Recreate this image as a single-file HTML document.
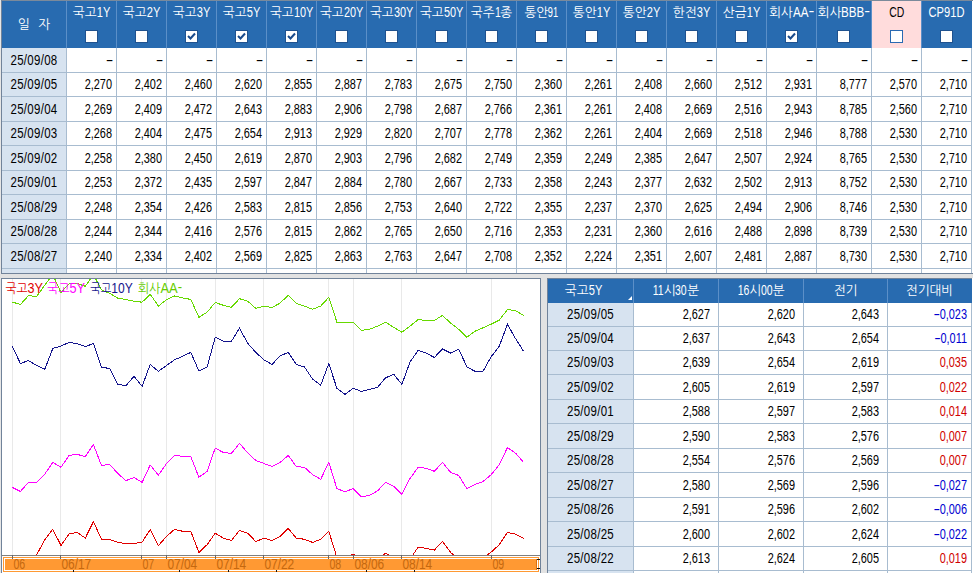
<!DOCTYPE html>
<html lang="ko"><head><meta charset="utf-8"><title>채권 금리</title>
<style>
html,body{margin:0;padding:0;}
body{width:973px;height:573px;overflow:hidden;background:#e2e2e2;position:relative;font-family:"Liberation Sans","NanumGothic","Noto Sans CJK KR",sans-serif;font-size:12px;line-height:14px;color:#000;}
div{position:absolute;box-sizing:border-box;white-space:nowrap;}
.h{background:#286bb0;color:#fff;text-align:center;}
.ht{left:-10px;right:-10px;text-align:center;font-size:13px;transform:scaleX(0.97);}
.L{display:inline-block;font-size:14px;transform-origin:left center;}
.d{background:#d7e3f0;text-align:center;}
.n{background:#fff;text-align:right;}
.cb{width:13px;height:13px;background:#fff;border:1px solid #1f528f;}
.cb svg{position:absolute;left:0;top:0;}
.vl{width:1px;background:#a8bcd0;}
.hl{height:1px;background:#a8bcd0;}
.t{left:0;right:0;font-size:14px;transform:scaleX(0.78);}
.n .t{transform-origin:right center;left:-10px;}
.d .t{letter-spacing:0.35px;left:-10px;right:-10px;transform:scaleX(0.82);}
.hy{display:inline-block;transform:scaleX(1.45) translateY(-1px);transform-origin:left center;}
.m{display:inline-block;transform:scaleX(2.1);transform-origin:right center;margin-right:-1.5px;}
.m2{display:inline-block;transform:scaleX(1.8);transform-origin:center center;margin:0 1.5px 0 2px;}

</style></head><body>
<div id="top" style="left:0;top:0;width:973px;height:274px;background:#fff;">
<div style="left:0;top:0;width:973px;height:1px;background:#7b8a9b;"></div>
<div style="left:0;top:0;width:1px;height:274px;background:#e6e6e6;"></div>
<div style="left:1px;top:0;width:1px;height:274px;background:#71839a;"></div>
<div style="left:1px;top:273px;width:972px;height:1px;background:#71839a;"></div>
<div class="h" style="left:2px;top:1px;width:970px;height:47px;"></div>
<div class="h" style="left:2px;top:1px;width:64px;height:47px;"><div class="ht" style="top:17px;word-spacing:0.8px;">일&nbsp; 자</div></div>
<div class="h" style="left:67px;top:1px;width:49px;height:47px;">
<div class="ht" style="top:4px;">국고<span class="L" style="transform:scaleX(0.818);margin-right:-3.12px;">1Y</span></div>
<div class="cb" style="left:18px;top:29px;"></div>
</div>
<div class="h" style="left:117px;top:1px;width:49px;height:47px;">
<div class="ht" style="top:4px;">국고<span class="L" style="transform:scaleX(0.818);margin-right:-3.12px;">2Y</span></div>
<div class="cb" style="left:18px;top:29px;"></div>
</div>
<div class="h" style="left:167px;top:1px;width:49px;height:47px;">
<div class="ht" style="top:4px;">국고<span class="L" style="transform:scaleX(0.818);margin-right:-3.12px;">3Y</span></div>
<div class="cb" style="left:18px;top:29px;"><svg width="11" height="11" viewBox="0 0 11 11"><path d="M2 5 L4.5 7.5 L9 2.5" fill="none" stroke="#1a4b8c" stroke-width="2"/></svg></div>
</div>
<div class="h" style="left:217px;top:1px;width:49px;height:47px;">
<div class="ht" style="top:4px;">국고<span class="L" style="transform:scaleX(0.818);margin-right:-3.12px;">5Y</span></div>
<div class="cb" style="left:18px;top:29px;"><svg width="11" height="11" viewBox="0 0 11 11"><path d="M2 5 L4.5 7.5 L9 2.5" fill="none" stroke="#1a4b8c" stroke-width="2"/></svg></div>
</div>
<div class="h" style="left:267px;top:1px;width:49px;height:47px;">
<div class="ht" style="top:4px;">국고<span class="L" style="transform:scaleX(0.803);margin-right:-4.91px;">10Y</span></div>
<div class="cb" style="left:18px;top:29px;"><svg width="11" height="11" viewBox="0 0 11 11"><path d="M2 5 L4.5 7.5 L9 2.5" fill="none" stroke="#1a4b8c" stroke-width="2"/></svg></div>
</div>
<div class="h" style="left:317px;top:1px;width:49px;height:47px;">
<div class="ht" style="top:4px;">국고<span class="L" style="transform:scaleX(0.803);margin-right:-4.91px;">20Y</span></div>
<div class="cb" style="left:18px;top:29px;"></div>
</div>
<div class="h" style="left:367px;top:1px;width:49px;height:47px;">
<div class="ht" style="top:4px;">국고<span class="L" style="transform:scaleX(0.803);margin-right:-4.91px;">30Y</span></div>
<div class="cb" style="left:18px;top:29px;"></div>
</div>
<div class="h" style="left:417px;top:1px;width:49px;height:47px;">
<div class="ht" style="top:4px;">국고<span class="L" style="transform:scaleX(0.803);margin-right:-4.91px;">50Y</span></div>
<div class="cb" style="left:18px;top:29px;"></div>
</div>
<div class="h" style="left:467px;top:1px;width:49px;height:47px;">
<div class="ht" style="top:4px;">국주<span class="L" style="transform:scaleX(0.771);margin-right:-1.78px;">1</span>종</div>
<div class="cb" style="left:18px;top:29px;"></div>
</div>
<div class="h" style="left:517px;top:1px;width:49px;height:47px;">
<div class="ht" style="top:4px;">통안<span class="L" style="transform:scaleX(0.681);margin-right:-4.97px;">91</span></div>
<div class="cb" style="left:18px;top:29px;"></div>
</div>
<div class="h" style="left:567px;top:1px;width:49px;height:47px;">
<div class="ht" style="top:4px;">통안<span class="L" style="transform:scaleX(0.818);margin-right:-3.12px;">1Y</span></div>
<div class="cb" style="left:18px;top:29px;"></div>
</div>
<div class="h" style="left:617px;top:1px;width:49px;height:47px;">
<div class="ht" style="top:4px;">통안<span class="L" style="transform:scaleX(0.818);margin-right:-3.12px;">2Y</span></div>
<div class="cb" style="left:18px;top:29px;"></div>
</div>
<div class="h" style="left:667px;top:1px;width:49px;height:47px;">
<div class="ht" style="top:4px;">한전<span class="L" style="transform:scaleX(0.818);margin-right:-3.12px;">3Y</span></div>
<div class="cb" style="left:18px;top:29px;"></div>
</div>
<div class="h" style="left:717px;top:1px;width:49px;height:47px;">
<div class="ht" style="top:4px;">산금<span class="L" style="transform:scaleX(0.818);margin-right:-3.12px;">1Y</span></div>
<div class="cb" style="left:18px;top:29px;"></div>
</div>
<div class="h" style="left:767px;top:1px;width:49px;height:47px;">
<div class="ht" style="top:4px;">회사<span class="L" style="transform:scaleX(0.857);margin-right:-2.68px;">AA</span><span class="L" style="transform:scaleX(1.287) translateY(-1px);margin-right:1.34px;">-</span></div>
<div class="cb" style="left:18px;top:29px;"><svg width="11" height="11" viewBox="0 0 11 11"><path d="M2 5 L4.5 7.5 L9 2.5" fill="none" stroke="#1a4b8c" stroke-width="2"/></svg></div>
</div>
<div class="h" style="left:817px;top:1px;width:54px;height:47px;">
<div class="ht" style="top:4px;">회사<span class="L" style="transform:scaleX(0.857);margin-right:-4.01px;">BBB</span><span class="L" style="transform:scaleX(1.287) translateY(-1px);margin-right:1.34px;">-</span></div>
<div class="cb" style="left:20px;top:29px;"></div>
</div>
<div class="h" style="left:872px;top:1px;width:49px;height:47px;background:#ffdcdc;color:#000;">
<div class="ht" style="top:4px;"><span class="L" style="transform:scaleX(0.767);margin-right:-4.72px;">CD</span></div>
<div class="cb" style="left:18px;top:29px;border-color:#2a6ab2;"></div>
</div>
<div class="h" style="left:922px;top:1px;width:49px;height:47px;">
<div class="ht" style="top:4px;"><span class="L" style="transform:scaleX(0.820);margin-right:-8.12px;">CP91D</span></div>
<div class="cb" style="left:18px;top:29px;"></div>
</div>
<div style="left:66px;top:1px;width:1px;height:47px;background:#5b8fc8;"></div>
<div style="left:116px;top:1px;width:1px;height:47px;background:#5b8fc8;"></div>
<div style="left:166px;top:1px;width:1px;height:47px;background:#5b8fc8;"></div>
<div style="left:216px;top:1px;width:1px;height:47px;background:#5b8fc8;"></div>
<div style="left:266px;top:1px;width:1px;height:47px;background:#5b8fc8;"></div>
<div style="left:316px;top:1px;width:1px;height:47px;background:#5b8fc8;"></div>
<div style="left:366px;top:1px;width:1px;height:47px;background:#5b8fc8;"></div>
<div style="left:416px;top:1px;width:1px;height:47px;background:#5b8fc8;"></div>
<div style="left:466px;top:1px;width:1px;height:47px;background:#5b8fc8;"></div>
<div style="left:516px;top:1px;width:1px;height:47px;background:#5b8fc8;"></div>
<div style="left:566px;top:1px;width:1px;height:47px;background:#5b8fc8;"></div>
<div style="left:616px;top:1px;width:1px;height:47px;background:#5b8fc8;"></div>
<div style="left:666px;top:1px;width:1px;height:47px;background:#5b8fc8;"></div>
<div style="left:716px;top:1px;width:1px;height:47px;background:#5b8fc8;"></div>
<div style="left:766px;top:1px;width:1px;height:47px;background:#5b8fc8;"></div>
<div style="left:816px;top:1px;width:1px;height:47px;background:#5b8fc8;"></div>
<div style="left:871px;top:1px;width:1px;height:47px;background:#5b8fc8;"></div>
<div style="left:921px;top:1px;width:1px;height:47px;background:#5b8fc8;"></div>
<div class="d" style="left:2px;top:48px;width:64px;height:24px;"><div class="t" style="top:5.0px;">25/09/08</div></div>
<div class="n" style="left:67px;top:48px;width:49px;height:24px;"><div class="t" style="top:5.0px;right:4px;"><span class="m">-</span></div></div>
<div class="n" style="left:117px;top:48px;width:49px;height:24px;"><div class="t" style="top:5.0px;right:4px;"><span class="m">-</span></div></div>
<div class="n" style="left:167px;top:48px;width:49px;height:24px;"><div class="t" style="top:5.0px;right:4px;"><span class="m">-</span></div></div>
<div class="n" style="left:217px;top:48px;width:49px;height:24px;"><div class="t" style="top:5.0px;right:4px;"><span class="m">-</span></div></div>
<div class="n" style="left:267px;top:48px;width:49px;height:24px;"><div class="t" style="top:5.0px;right:4px;"><span class="m">-</span></div></div>
<div class="n" style="left:317px;top:48px;width:49px;height:24px;"><div class="t" style="top:5.0px;right:4px;"><span class="m">-</span></div></div>
<div class="n" style="left:367px;top:48px;width:49px;height:24px;"><div class="t" style="top:5.0px;right:4px;"><span class="m">-</span></div></div>
<div class="n" style="left:417px;top:48px;width:49px;height:24px;"><div class="t" style="top:5.0px;right:4px;"><span class="m">-</span></div></div>
<div class="n" style="left:467px;top:48px;width:49px;height:24px;"><div class="t" style="top:5.0px;right:4px;"><span class="m">-</span></div></div>
<div class="n" style="left:517px;top:48px;width:49px;height:24px;"><div class="t" style="top:5.0px;right:4px;"><span class="m">-</span></div></div>
<div class="n" style="left:567px;top:48px;width:49px;height:24px;"><div class="t" style="top:5.0px;right:4px;"><span class="m">-</span></div></div>
<div class="n" style="left:617px;top:48px;width:49px;height:24px;"><div class="t" style="top:5.0px;right:4px;"><span class="m">-</span></div></div>
<div class="n" style="left:667px;top:48px;width:49px;height:24px;"><div class="t" style="top:5.0px;right:4px;"><span class="m">-</span></div></div>
<div class="n" style="left:717px;top:48px;width:49px;height:24px;"><div class="t" style="top:5.0px;right:4px;"><span class="m">-</span></div></div>
<div class="n" style="left:767px;top:48px;width:49px;height:24px;"><div class="t" style="top:5.0px;right:4px;"><span class="m">-</span></div></div>
<div class="n" style="left:817px;top:48px;width:54px;height:24px;"><div class="t" style="top:5.0px;right:4px;"><span class="m">-</span></div></div>
<div class="n" style="left:872px;top:48px;width:49px;height:24px;"><div class="t" style="top:5.0px;right:4px;"><span class="m">-</span></div></div>
<div class="n" style="left:922px;top:48px;width:49px;height:24px;"><div class="t" style="top:5.0px;right:4px;"><span class="m">-</span></div></div>
<div class="d" style="left:2px;top:73px;width:64px;height:23px;"><div class="t" style="top:4.0px;">25/09/05</div></div>
<div class="n" style="left:67px;top:73px;width:49px;height:23px;"><div class="t" style="top:4.0px;right:4px;">2,270</div></div>
<div class="n" style="left:117px;top:73px;width:49px;height:23px;"><div class="t" style="top:4.0px;right:4px;">2,402</div></div>
<div class="n" style="left:167px;top:73px;width:49px;height:23px;"><div class="t" style="top:4.0px;right:4px;">2,460</div></div>
<div class="n" style="left:217px;top:73px;width:49px;height:23px;"><div class="t" style="top:4.0px;right:4px;">2,620</div></div>
<div class="n" style="left:267px;top:73px;width:49px;height:23px;"><div class="t" style="top:4.0px;right:4px;">2,855</div></div>
<div class="n" style="left:317px;top:73px;width:49px;height:23px;"><div class="t" style="top:4.0px;right:4px;">2,887</div></div>
<div class="n" style="left:367px;top:73px;width:49px;height:23px;"><div class="t" style="top:4.0px;right:4px;">2,783</div></div>
<div class="n" style="left:417px;top:73px;width:49px;height:23px;"><div class="t" style="top:4.0px;right:4px;">2,675</div></div>
<div class="n" style="left:467px;top:73px;width:49px;height:23px;"><div class="t" style="top:4.0px;right:4px;">2,750</div></div>
<div class="n" style="left:517px;top:73px;width:49px;height:23px;"><div class="t" style="top:4.0px;right:4px;">2,360</div></div>
<div class="n" style="left:567px;top:73px;width:49px;height:23px;"><div class="t" style="top:4.0px;right:4px;">2,261</div></div>
<div class="n" style="left:617px;top:73px;width:49px;height:23px;"><div class="t" style="top:4.0px;right:4px;">2,408</div></div>
<div class="n" style="left:667px;top:73px;width:49px;height:23px;"><div class="t" style="top:4.0px;right:4px;">2,660</div></div>
<div class="n" style="left:717px;top:73px;width:49px;height:23px;"><div class="t" style="top:4.0px;right:4px;">2,512</div></div>
<div class="n" style="left:767px;top:73px;width:49px;height:23px;"><div class="t" style="top:4.0px;right:4px;">2,931</div></div>
<div class="n" style="left:817px;top:73px;width:54px;height:23px;"><div class="t" style="top:4.0px;right:4px;">8,777</div></div>
<div class="n" style="left:872px;top:73px;width:49px;height:23px;"><div class="t" style="top:4.0px;right:4px;">2,570</div></div>
<div class="n" style="left:922px;top:73px;width:49px;height:23px;"><div class="t" style="top:4.0px;right:4px;">2,710</div></div>
<div class="d" style="left:2px;top:97px;width:64px;height:24px;"><div class="t" style="top:5.0px;">25/09/04</div></div>
<div class="n" style="left:67px;top:97px;width:49px;height:24px;"><div class="t" style="top:5.0px;right:4px;">2,269</div></div>
<div class="n" style="left:117px;top:97px;width:49px;height:24px;"><div class="t" style="top:5.0px;right:4px;">2,409</div></div>
<div class="n" style="left:167px;top:97px;width:49px;height:24px;"><div class="t" style="top:5.0px;right:4px;">2,472</div></div>
<div class="n" style="left:217px;top:97px;width:49px;height:24px;"><div class="t" style="top:5.0px;right:4px;">2,643</div></div>
<div class="n" style="left:267px;top:97px;width:49px;height:24px;"><div class="t" style="top:5.0px;right:4px;">2,883</div></div>
<div class="n" style="left:317px;top:97px;width:49px;height:24px;"><div class="t" style="top:5.0px;right:4px;">2,906</div></div>
<div class="n" style="left:367px;top:97px;width:49px;height:24px;"><div class="t" style="top:5.0px;right:4px;">2,798</div></div>
<div class="n" style="left:417px;top:97px;width:49px;height:24px;"><div class="t" style="top:5.0px;right:4px;">2,687</div></div>
<div class="n" style="left:467px;top:97px;width:49px;height:24px;"><div class="t" style="top:5.0px;right:4px;">2,766</div></div>
<div class="n" style="left:517px;top:97px;width:49px;height:24px;"><div class="t" style="top:5.0px;right:4px;">2,361</div></div>
<div class="n" style="left:567px;top:97px;width:49px;height:24px;"><div class="t" style="top:5.0px;right:4px;">2,261</div></div>
<div class="n" style="left:617px;top:97px;width:49px;height:24px;"><div class="t" style="top:5.0px;right:4px;">2,408</div></div>
<div class="n" style="left:667px;top:97px;width:49px;height:24px;"><div class="t" style="top:5.0px;right:4px;">2,669</div></div>
<div class="n" style="left:717px;top:97px;width:49px;height:24px;"><div class="t" style="top:5.0px;right:4px;">2,516</div></div>
<div class="n" style="left:767px;top:97px;width:49px;height:24px;"><div class="t" style="top:5.0px;right:4px;">2,943</div></div>
<div class="n" style="left:817px;top:97px;width:54px;height:24px;"><div class="t" style="top:5.0px;right:4px;">8,785</div></div>
<div class="n" style="left:872px;top:97px;width:49px;height:24px;"><div class="t" style="top:5.0px;right:4px;">2,560</div></div>
<div class="n" style="left:922px;top:97px;width:49px;height:24px;"><div class="t" style="top:5.0px;right:4px;">2,710</div></div>
<div class="d" style="left:2px;top:122px;width:64px;height:23px;"><div class="t" style="top:4.0px;">25/09/03</div></div>
<div class="n" style="left:67px;top:122px;width:49px;height:23px;"><div class="t" style="top:4.0px;right:4px;">2,268</div></div>
<div class="n" style="left:117px;top:122px;width:49px;height:23px;"><div class="t" style="top:4.0px;right:4px;">2,404</div></div>
<div class="n" style="left:167px;top:122px;width:49px;height:23px;"><div class="t" style="top:4.0px;right:4px;">2,475</div></div>
<div class="n" style="left:217px;top:122px;width:49px;height:23px;"><div class="t" style="top:4.0px;right:4px;">2,654</div></div>
<div class="n" style="left:267px;top:122px;width:49px;height:23px;"><div class="t" style="top:4.0px;right:4px;">2,913</div></div>
<div class="n" style="left:317px;top:122px;width:49px;height:23px;"><div class="t" style="top:4.0px;right:4px;">2,929</div></div>
<div class="n" style="left:367px;top:122px;width:49px;height:23px;"><div class="t" style="top:4.0px;right:4px;">2,820</div></div>
<div class="n" style="left:417px;top:122px;width:49px;height:23px;"><div class="t" style="top:4.0px;right:4px;">2,707</div></div>
<div class="n" style="left:467px;top:122px;width:49px;height:23px;"><div class="t" style="top:4.0px;right:4px;">2,778</div></div>
<div class="n" style="left:517px;top:122px;width:49px;height:23px;"><div class="t" style="top:4.0px;right:4px;">2,362</div></div>
<div class="n" style="left:567px;top:122px;width:49px;height:23px;"><div class="t" style="top:4.0px;right:4px;">2,261</div></div>
<div class="n" style="left:617px;top:122px;width:49px;height:23px;"><div class="t" style="top:4.0px;right:4px;">2,404</div></div>
<div class="n" style="left:667px;top:122px;width:49px;height:23px;"><div class="t" style="top:4.0px;right:4px;">2,669</div></div>
<div class="n" style="left:717px;top:122px;width:49px;height:23px;"><div class="t" style="top:4.0px;right:4px;">2,518</div></div>
<div class="n" style="left:767px;top:122px;width:49px;height:23px;"><div class="t" style="top:4.0px;right:4px;">2,946</div></div>
<div class="n" style="left:817px;top:122px;width:54px;height:23px;"><div class="t" style="top:4.0px;right:4px;">8,788</div></div>
<div class="n" style="left:872px;top:122px;width:49px;height:23px;"><div class="t" style="top:4.0px;right:4px;">2,530</div></div>
<div class="n" style="left:922px;top:122px;width:49px;height:23px;"><div class="t" style="top:4.0px;right:4px;">2,710</div></div>
<div class="d" style="left:2px;top:146px;width:64px;height:24px;"><div class="t" style="top:5.0px;">25/09/02</div></div>
<div class="n" style="left:67px;top:146px;width:49px;height:24px;"><div class="t" style="top:5.0px;right:4px;">2,258</div></div>
<div class="n" style="left:117px;top:146px;width:49px;height:24px;"><div class="t" style="top:5.0px;right:4px;">2,380</div></div>
<div class="n" style="left:167px;top:146px;width:49px;height:24px;"><div class="t" style="top:5.0px;right:4px;">2,450</div></div>
<div class="n" style="left:217px;top:146px;width:49px;height:24px;"><div class="t" style="top:5.0px;right:4px;">2,619</div></div>
<div class="n" style="left:267px;top:146px;width:49px;height:24px;"><div class="t" style="top:5.0px;right:4px;">2,870</div></div>
<div class="n" style="left:317px;top:146px;width:49px;height:24px;"><div class="t" style="top:5.0px;right:4px;">2,903</div></div>
<div class="n" style="left:367px;top:146px;width:49px;height:24px;"><div class="t" style="top:5.0px;right:4px;">2,796</div></div>
<div class="n" style="left:417px;top:146px;width:49px;height:24px;"><div class="t" style="top:5.0px;right:4px;">2,682</div></div>
<div class="n" style="left:467px;top:146px;width:49px;height:24px;"><div class="t" style="top:5.0px;right:4px;">2,749</div></div>
<div class="n" style="left:517px;top:146px;width:49px;height:24px;"><div class="t" style="top:5.0px;right:4px;">2,359</div></div>
<div class="n" style="left:567px;top:146px;width:49px;height:24px;"><div class="t" style="top:5.0px;right:4px;">2,249</div></div>
<div class="n" style="left:617px;top:146px;width:49px;height:24px;"><div class="t" style="top:5.0px;right:4px;">2,385</div></div>
<div class="n" style="left:667px;top:146px;width:49px;height:24px;"><div class="t" style="top:5.0px;right:4px;">2,647</div></div>
<div class="n" style="left:717px;top:146px;width:49px;height:24px;"><div class="t" style="top:5.0px;right:4px;">2,507</div></div>
<div class="n" style="left:767px;top:146px;width:49px;height:24px;"><div class="t" style="top:5.0px;right:4px;">2,924</div></div>
<div class="n" style="left:817px;top:146px;width:54px;height:24px;"><div class="t" style="top:5.0px;right:4px;">8,765</div></div>
<div class="n" style="left:872px;top:146px;width:49px;height:24px;"><div class="t" style="top:5.0px;right:4px;">2,530</div></div>
<div class="n" style="left:922px;top:146px;width:49px;height:24px;"><div class="t" style="top:5.0px;right:4px;">2,710</div></div>
<div class="d" style="left:2px;top:171px;width:64px;height:23px;"><div class="t" style="top:4.0px;">25/09/01</div></div>
<div class="n" style="left:67px;top:171px;width:49px;height:23px;"><div class="t" style="top:4.0px;right:4px;">2,253</div></div>
<div class="n" style="left:117px;top:171px;width:49px;height:23px;"><div class="t" style="top:4.0px;right:4px;">2,372</div></div>
<div class="n" style="left:167px;top:171px;width:49px;height:23px;"><div class="t" style="top:4.0px;right:4px;">2,435</div></div>
<div class="n" style="left:217px;top:171px;width:49px;height:23px;"><div class="t" style="top:4.0px;right:4px;">2,597</div></div>
<div class="n" style="left:267px;top:171px;width:49px;height:23px;"><div class="t" style="top:4.0px;right:4px;">2,847</div></div>
<div class="n" style="left:317px;top:171px;width:49px;height:23px;"><div class="t" style="top:4.0px;right:4px;">2,884</div></div>
<div class="n" style="left:367px;top:171px;width:49px;height:23px;"><div class="t" style="top:4.0px;right:4px;">2,780</div></div>
<div class="n" style="left:417px;top:171px;width:49px;height:23px;"><div class="t" style="top:4.0px;right:4px;">2,667</div></div>
<div class="n" style="left:467px;top:171px;width:49px;height:23px;"><div class="t" style="top:4.0px;right:4px;">2,733</div></div>
<div class="n" style="left:517px;top:171px;width:49px;height:23px;"><div class="t" style="top:4.0px;right:4px;">2,358</div></div>
<div class="n" style="left:567px;top:171px;width:49px;height:23px;"><div class="t" style="top:4.0px;right:4px;">2,243</div></div>
<div class="n" style="left:617px;top:171px;width:49px;height:23px;"><div class="t" style="top:4.0px;right:4px;">2,377</div></div>
<div class="n" style="left:667px;top:171px;width:49px;height:23px;"><div class="t" style="top:4.0px;right:4px;">2,632</div></div>
<div class="n" style="left:717px;top:171px;width:49px;height:23px;"><div class="t" style="top:4.0px;right:4px;">2,502</div></div>
<div class="n" style="left:767px;top:171px;width:49px;height:23px;"><div class="t" style="top:4.0px;right:4px;">2,913</div></div>
<div class="n" style="left:817px;top:171px;width:54px;height:23px;"><div class="t" style="top:4.0px;right:4px;">8,752</div></div>
<div class="n" style="left:872px;top:171px;width:49px;height:23px;"><div class="t" style="top:4.0px;right:4px;">2,530</div></div>
<div class="n" style="left:922px;top:171px;width:49px;height:23px;"><div class="t" style="top:4.0px;right:4px;">2,710</div></div>
<div class="d" style="left:2px;top:195px;width:64px;height:24px;"><div class="t" style="top:5.0px;">25/08/29</div></div>
<div class="n" style="left:67px;top:195px;width:49px;height:24px;"><div class="t" style="top:5.0px;right:4px;">2,248</div></div>
<div class="n" style="left:117px;top:195px;width:49px;height:24px;"><div class="t" style="top:5.0px;right:4px;">2,354</div></div>
<div class="n" style="left:167px;top:195px;width:49px;height:24px;"><div class="t" style="top:5.0px;right:4px;">2,426</div></div>
<div class="n" style="left:217px;top:195px;width:49px;height:24px;"><div class="t" style="top:5.0px;right:4px;">2,583</div></div>
<div class="n" style="left:267px;top:195px;width:49px;height:24px;"><div class="t" style="top:5.0px;right:4px;">2,815</div></div>
<div class="n" style="left:317px;top:195px;width:49px;height:24px;"><div class="t" style="top:5.0px;right:4px;">2,856</div></div>
<div class="n" style="left:367px;top:195px;width:49px;height:24px;"><div class="t" style="top:5.0px;right:4px;">2,753</div></div>
<div class="n" style="left:417px;top:195px;width:49px;height:24px;"><div class="t" style="top:5.0px;right:4px;">2,640</div></div>
<div class="n" style="left:467px;top:195px;width:49px;height:24px;"><div class="t" style="top:5.0px;right:4px;">2,722</div></div>
<div class="n" style="left:517px;top:195px;width:49px;height:24px;"><div class="t" style="top:5.0px;right:4px;">2,355</div></div>
<div class="n" style="left:567px;top:195px;width:49px;height:24px;"><div class="t" style="top:5.0px;right:4px;">2,237</div></div>
<div class="n" style="left:617px;top:195px;width:49px;height:24px;"><div class="t" style="top:5.0px;right:4px;">2,370</div></div>
<div class="n" style="left:667px;top:195px;width:49px;height:24px;"><div class="t" style="top:5.0px;right:4px;">2,625</div></div>
<div class="n" style="left:717px;top:195px;width:49px;height:24px;"><div class="t" style="top:5.0px;right:4px;">2,494</div></div>
<div class="n" style="left:767px;top:195px;width:49px;height:24px;"><div class="t" style="top:5.0px;right:4px;">2,906</div></div>
<div class="n" style="left:817px;top:195px;width:54px;height:24px;"><div class="t" style="top:5.0px;right:4px;">8,746</div></div>
<div class="n" style="left:872px;top:195px;width:49px;height:24px;"><div class="t" style="top:5.0px;right:4px;">2,530</div></div>
<div class="n" style="left:922px;top:195px;width:49px;height:24px;"><div class="t" style="top:5.0px;right:4px;">2,710</div></div>
<div class="d" style="left:2px;top:220px;width:64px;height:23px;"><div class="t" style="top:4.0px;">25/08/28</div></div>
<div class="n" style="left:67px;top:220px;width:49px;height:23px;"><div class="t" style="top:4.0px;right:4px;">2,244</div></div>
<div class="n" style="left:117px;top:220px;width:49px;height:23px;"><div class="t" style="top:4.0px;right:4px;">2,344</div></div>
<div class="n" style="left:167px;top:220px;width:49px;height:23px;"><div class="t" style="top:4.0px;right:4px;">2,416</div></div>
<div class="n" style="left:217px;top:220px;width:49px;height:23px;"><div class="t" style="top:4.0px;right:4px;">2,576</div></div>
<div class="n" style="left:267px;top:220px;width:49px;height:23px;"><div class="t" style="top:4.0px;right:4px;">2,815</div></div>
<div class="n" style="left:317px;top:220px;width:49px;height:23px;"><div class="t" style="top:4.0px;right:4px;">2,862</div></div>
<div class="n" style="left:367px;top:220px;width:49px;height:23px;"><div class="t" style="top:4.0px;right:4px;">2,765</div></div>
<div class="n" style="left:417px;top:220px;width:49px;height:23px;"><div class="t" style="top:4.0px;right:4px;">2,650</div></div>
<div class="n" style="left:467px;top:220px;width:49px;height:23px;"><div class="t" style="top:4.0px;right:4px;">2,716</div></div>
<div class="n" style="left:517px;top:220px;width:49px;height:23px;"><div class="t" style="top:4.0px;right:4px;">2,353</div></div>
<div class="n" style="left:567px;top:220px;width:49px;height:23px;"><div class="t" style="top:4.0px;right:4px;">2,231</div></div>
<div class="n" style="left:617px;top:220px;width:49px;height:23px;"><div class="t" style="top:4.0px;right:4px;">2,360</div></div>
<div class="n" style="left:667px;top:220px;width:49px;height:23px;"><div class="t" style="top:4.0px;right:4px;">2,616</div></div>
<div class="n" style="left:717px;top:220px;width:49px;height:23px;"><div class="t" style="top:4.0px;right:4px;">2,488</div></div>
<div class="n" style="left:767px;top:220px;width:49px;height:23px;"><div class="t" style="top:4.0px;right:4px;">2,898</div></div>
<div class="n" style="left:817px;top:220px;width:54px;height:23px;"><div class="t" style="top:4.0px;right:4px;">8,739</div></div>
<div class="n" style="left:872px;top:220px;width:49px;height:23px;"><div class="t" style="top:4.0px;right:4px;">2,530</div></div>
<div class="n" style="left:922px;top:220px;width:49px;height:23px;"><div class="t" style="top:4.0px;right:4px;">2,710</div></div>
<div class="d" style="left:2px;top:244px;width:64px;height:24px;"><div class="t" style="top:5.0px;">25/08/27</div></div>
<div class="n" style="left:67px;top:244px;width:49px;height:24px;"><div class="t" style="top:5.0px;right:4px;">2,240</div></div>
<div class="n" style="left:117px;top:244px;width:49px;height:24px;"><div class="t" style="top:5.0px;right:4px;">2,334</div></div>
<div class="n" style="left:167px;top:244px;width:49px;height:24px;"><div class="t" style="top:5.0px;right:4px;">2,402</div></div>
<div class="n" style="left:217px;top:244px;width:49px;height:24px;"><div class="t" style="top:5.0px;right:4px;">2,569</div></div>
<div class="n" style="left:267px;top:244px;width:49px;height:24px;"><div class="t" style="top:5.0px;right:4px;">2,825</div></div>
<div class="n" style="left:317px;top:244px;width:49px;height:24px;"><div class="t" style="top:5.0px;right:4px;">2,863</div></div>
<div class="n" style="left:367px;top:244px;width:49px;height:24px;"><div class="t" style="top:5.0px;right:4px;">2,763</div></div>
<div class="n" style="left:417px;top:244px;width:49px;height:24px;"><div class="t" style="top:5.0px;right:4px;">2,647</div></div>
<div class="n" style="left:467px;top:244px;width:49px;height:24px;"><div class="t" style="top:5.0px;right:4px;">2,708</div></div>
<div class="n" style="left:517px;top:244px;width:49px;height:24px;"><div class="t" style="top:5.0px;right:4px;">2,352</div></div>
<div class="n" style="left:567px;top:244px;width:49px;height:24px;"><div class="t" style="top:5.0px;right:4px;">2,224</div></div>
<div class="n" style="left:617px;top:244px;width:49px;height:24px;"><div class="t" style="top:5.0px;right:4px;">2,351</div></div>
<div class="n" style="left:667px;top:244px;width:49px;height:24px;"><div class="t" style="top:5.0px;right:4px;">2,607</div></div>
<div class="n" style="left:717px;top:244px;width:49px;height:24px;"><div class="t" style="top:5.0px;right:4px;">2,481</div></div>
<div class="n" style="left:767px;top:244px;width:49px;height:24px;"><div class="t" style="top:5.0px;right:4px;">2,887</div></div>
<div class="n" style="left:817px;top:244px;width:54px;height:24px;"><div class="t" style="top:5.0px;right:4px;">8,730</div></div>
<div class="n" style="left:872px;top:244px;width:49px;height:24px;"><div class="t" style="top:5.0px;right:4px;">2,530</div></div>
<div class="n" style="left:922px;top:244px;width:49px;height:24px;"><div class="t" style="top:5.0px;right:4px;">2,710</div></div>
<div class="d" style="left:2px;top:269px;width:64px;height:4px;"></div>
<div class="hl" style="left:2px;top:72px;width:970px;"></div>
<div class="hl" style="left:2px;top:96px;width:970px;"></div>
<div class="hl" style="left:2px;top:121px;width:970px;"></div>
<div class="hl" style="left:2px;top:145px;width:970px;"></div>
<div class="hl" style="left:2px;top:170px;width:970px;"></div>
<div class="hl" style="left:2px;top:194px;width:970px;"></div>
<div class="hl" style="left:2px;top:219px;width:970px;"></div>
<div class="hl" style="left:2px;top:243px;width:970px;"></div>
<div class="hl" style="left:2px;top:268px;width:970px;"></div>
<div class="vl" style="left:66px;top:48px;height:225px;"></div>
<div class="vl" style="left:116px;top:48px;height:225px;"></div>
<div class="vl" style="left:166px;top:48px;height:225px;"></div>
<div class="vl" style="left:216px;top:48px;height:225px;"></div>
<div class="vl" style="left:266px;top:48px;height:225px;"></div>
<div class="vl" style="left:316px;top:48px;height:225px;"></div>
<div class="vl" style="left:366px;top:48px;height:225px;"></div>
<div class="vl" style="left:416px;top:48px;height:225px;"></div>
<div class="vl" style="left:466px;top:48px;height:225px;"></div>
<div class="vl" style="left:516px;top:48px;height:225px;"></div>
<div class="vl" style="left:566px;top:48px;height:225px;"></div>
<div class="vl" style="left:616px;top:48px;height:225px;"></div>
<div class="vl" style="left:666px;top:48px;height:225px;"></div>
<div class="vl" style="left:716px;top:48px;height:225px;"></div>
<div class="vl" style="left:766px;top:48px;height:225px;"></div>
<div class="vl" style="left:816px;top:48px;height:225px;"></div>
<div class="vl" style="left:871px;top:48px;height:225px;"></div>
<div class="vl" style="left:921px;top:48px;height:225px;"></div>
<div class="vl" style="left:971px;top:48px;height:225px;"></div>
<div style="left:972px;top:1px;width:1px;height:272px;background:#fff;"></div>
</div>
<div id="chart" style="left:0;top:278px;width:541px;height:295px;background:#fff;">
<div style="left:0;top:0;width:1px;height:295px;background:#e6e6e6;"></div>
<div style="left:1px;top:0;width:1px;height:295px;background:#71839a;"></div>
<div style="left:1px;top:0;width:540px;height:1px;background:#71839a;"></div>
<div style="left:540px;top:0;width:1px;height:295px;background:#71839a;"></div>
<svg width="541" height="295" viewBox="0 278 541 295" style="position:absolute;left:0;top:0;font-family:'Liberation Sans','NanumGothic','Noto Sans CJK KR',sans-serif;font-size:12px;"><defs><clipPath id="cp"><rect x="2" y="279" width="538" height="276.5"/></clipPath></defs><rect x="12" y="279" width="1" height="276" fill="#e9e9e9"/><rect x="60" y="279" width="1" height="276" fill="#e9e9e9"/><rect x="141" y="279" width="1" height="276" fill="#e9e9e9"/><rect x="166" y="279" width="1" height="276" fill="#e9e9e9"/><rect x="215" y="279" width="1" height="276" fill="#e9e9e9"/><rect x="263" y="279" width="1" height="276" fill="#e9e9e9"/><rect x="328" y="279" width="1" height="276" fill="#e9e9e9"/><rect x="353" y="279" width="1" height="276" fill="#e9e9e9"/><rect x="401" y="279" width="1" height="276" fill="#e9e9e9"/><rect x="491" y="279" width="1" height="276" fill="#e9e9e9"/><g clip-path="url(#cp)" fill="none" stroke-width="1" stroke-linejoin="miter" shape-rendering="crispEdges"><polyline points="12.2,302.0 20.4,304.5 28.5,295.6 36.6,296.5 44.7,285.3 52.8,274.7 61.0,292.6 69.1,283.7 77.2,283.5 85.3,286.3 93.4,274.6 101.5,289.9 109.7,293.3 117.8,298.1 125.9,299.6 134.0,301.2 142.1,302.2 150.2,294.2 158.4,306.1 166.5,299.6 174.6,296.0 182.7,298.0 190.8,299.4 198.9,317.3 207.1,312.2 215.2,302.5 223.3,305.3 231.4,307.3 239.5,298.7 247.6,301.1 255.8,308.4 263.9,306.3 272.0,307.5 280.1,303.1 288.2,295.3 296.3,303.4 304.5,306.2 312.6,309.3 320.7,306.1 328.8,297.3 336.9,322.2 345.0,322.2 353.2,322.2 361.3,330.3 369.4,329.3 377.5,326.1 385.6,322.2 393.7,327.3 401.9,332.2 410.0,326.2 418.1,319.6 426.2,320.5 434.3,320.5 442.5,315.4 450.6,323.1 458.7,329.3 466.8,337.3 474.9,331.3 483.0,327.8 491.2,324.2 499.3,320.1 507.4,309.6 515.5,310.5 523.6,315.4" stroke="#66d900"/><polyline points="12.2,346.1 20.4,363.5 28.5,360.5 36.6,365.4 44.7,369.4 52.8,348.4 61.0,346.1 69.1,342.4 77.2,343.7 85.3,346.6 93.4,343.5 101.5,367.1 109.7,368.6 117.8,384.3 125.9,385.6 134.0,376.3 142.1,386.4 150.2,364.5 158.4,371.3 166.5,365.5 174.6,359.8 182.7,356.2 190.8,352.4 198.9,370.9 207.1,367.0 215.2,337.3 223.3,341.3 231.4,341.3 239.5,328.2 247.6,343.1 255.8,352.4 263.9,359.8 272.0,364.4 280.1,356.0 288.2,352.4 296.3,364.4 304.5,367.0 312.6,379.0 320.7,385.2 328.8,363.6 336.9,388.3 345.0,394.5 353.2,388.3 361.3,391.4 369.4,389.4 377.5,387.4 385.6,377.8 393.7,374.3 401.9,384.3 410.0,362.0 418.1,350.5 426.2,353.1 434.3,357.5 442.5,349.0 450.6,353.1 458.7,349.0 466.8,366.7 474.9,371.3 483.0,371.3 491.2,356.7 499.3,346.2 507.4,324.3 515.5,338.5 523.6,351.3" stroke="#14148c"/><polyline points="12.2,487.3 20.4,491.4 28.5,482.4 36.6,482.4 44.7,474.2 52.8,462.4 61.0,467.3 69.1,455.4 77.2,454.4 85.3,456.5 93.4,444.6 101.5,465.5 109.7,464.4 117.8,473.5 125.9,480.6 134.0,477.5 142.1,482.4 150.2,465.0 158.4,475.2 166.5,463.6 174.6,455.1 182.7,456.5 190.8,456.5 198.9,477.3 207.1,471.3 215.2,448.2 223.3,452.4 231.4,453.4 239.5,443.4 247.6,452.8 255.8,460.4 263.9,463.5 272.0,466.5 280.1,462.4 288.2,455.4 296.3,466.5 304.5,467.3 312.6,474.7 320.7,479.3 328.8,462.4 336.9,488.6 345.0,491.7 353.2,488.6 361.3,496.6 369.4,495.5 377.5,490.9 385.6,482.4 393.7,486.4 401.9,494.3 410.0,478.4 418.1,467.5 426.2,468.2 434.3,471.3 442.5,462.4 450.6,472.4 458.7,475.5 466.8,488.6 474.9,484.4 483.0,481.6 491.2,474.7 499.3,464.7 507.4,447.7 515.5,453.1 523.6,462.4" stroke="#ff00ff"/><polyline points="12.2,566.0 20.4,568.0 28.5,564.0 36.6,555.0 44.7,539.8 52.8,529.3 61.0,545.5 69.1,533.9 77.2,532.4 85.3,538.1 93.4,521.6 101.5,539.3 109.7,539.6 117.8,542.4 125.9,543.6 134.0,543.6 142.1,542.1 150.2,529.7 158.4,545.5 166.5,536.5 174.6,529.3 182.7,531.3 190.8,531.3 198.9,552.4 207.1,544.7 215.2,533.1 223.3,538.2 231.4,540.5 239.5,530.4 247.6,533.1 255.8,541.6 263.9,538.2 272.0,540.5 280.1,536.5 288.2,528.5 296.3,538.1 304.5,539.3 312.6,542.4 320.7,539.3 328.8,531.3 336.9,557.5 345.0,559.0 353.2,554.0 361.3,559.0 369.4,559.0 377.5,558.0 385.6,553.3 393.7,558.0 401.9,562.0 410.0,559.5 418.1,547.0 426.2,548.3 434.3,550.1 442.5,541.3 450.6,552.4 458.7,559.5 466.8,568.0 474.9,562.0 483.0,557.7 491.2,552.1 499.3,544.7 507.4,532.4 515.5,534.2 523.6,538.5" stroke="#e00000"/></g><text x="5.5" y="293" font-size="13" textLength="37.5" lengthAdjust="spacingAndGlyphs" fill="#e00000">국고<tspan font-size="14">3Y</tspan></text><text x="47.3" y="293" font-size="13" textLength="37.8" lengthAdjust="spacingAndGlyphs" fill="#ff00ff">국고<tspan font-size="14">5Y</tspan></text><text x="90.3" y="293" font-size="13" textLength="42.5" lengthAdjust="spacingAndGlyphs" fill="#14148c">국고<tspan font-size="14">10Y</tspan></text><text x="137.8" y="293" font-size="13" textLength="44.3" lengthAdjust="spacingAndGlyphs" fill="#66cc00">회사<tspan font-size="14">AA</tspan><tspan font-size="14" dy="-1">-</tspan></text><rect x="2" y="555" width="538" height="1" fill="#808080"/><rect x="3.5" y="557.5" width="535" height="14" fill="#fff" stroke="#ff9933" stroke-width="1"/><rect x="5" y="559" width="532" height="11" fill="#ff9933"/><rect x="12" y="555" width="1" height="4" fill="#666"/><text x="13.4" y="569" font-size="14" textLength="11.8" lengthAdjust="spacingAndGlyphs" fill="#c4680f">06</text><rect x="60" y="555" width="1" height="4" fill="#666"/><text x="61.4" y="569" font-size="14" textLength="29.8" lengthAdjust="spacingAndGlyphs" fill="#c4680f">06/17</text><rect x="73" y="570" width="1" height="2" fill="#111"/><rect x="141" y="555" width="1" height="4" fill="#666"/><text x="142.4" y="569" font-size="14" textLength="11.8" lengthAdjust="spacingAndGlyphs" fill="#c4680f">07</text><rect x="166" y="555" width="1" height="4" fill="#666"/><text x="167.4" y="569" font-size="14" textLength="29.8" lengthAdjust="spacingAndGlyphs" fill="#c4680f">07/04</text><rect x="179" y="570" width="1" height="2" fill="#111"/><rect x="215" y="555" width="1" height="4" fill="#666"/><text x="216.4" y="569" font-size="14" textLength="29.8" lengthAdjust="spacingAndGlyphs" fill="#c4680f">07/14</text><rect x="228" y="570" width="1" height="2" fill="#111"/><rect x="263" y="555" width="1" height="4" fill="#666"/><text x="264.4" y="569" font-size="14" textLength="29.8" lengthAdjust="spacingAndGlyphs" fill="#c4680f">07/22</text><rect x="276" y="570" width="1" height="2" fill="#111"/><rect x="328" y="555" width="1" height="4" fill="#666"/><text x="329.4" y="569" font-size="14" textLength="11.8" lengthAdjust="spacingAndGlyphs" fill="#c4680f">08</text><rect x="353" y="555" width="1" height="4" fill="#666"/><text x="354.4" y="569" font-size="14" textLength="29.8" lengthAdjust="spacingAndGlyphs" fill="#c4680f">08/06</text><rect x="366" y="570" width="1" height="2" fill="#111"/><rect x="401" y="555" width="1" height="4" fill="#666"/><text x="402.4" y="569" font-size="14" textLength="29.8" lengthAdjust="spacingAndGlyphs" fill="#c4680f">08/14</text><rect x="414" y="570" width="1" height="2" fill="#111"/><rect x="491" y="555" width="1" height="4" fill="#666"/><text x="492.4" y="569" font-size="14" textLength="11.8" lengthAdjust="spacingAndGlyphs" fill="#c4680f">09</text><rect x="536" y="559" width="1" height="11" fill="#d9700f"/><rect x="537" y="559" width="3" height="1" fill="#111"/><rect x="537" y="568" width="3" height="1" fill="#111"/></svg>
</div>
<div id="rt" style="left:547px;top:278px;width:426px;height:295px;background:#fff;">
<div style="left:0;top:0;width:1px;height:295px;background:#71839a;"></div>
<div style="left:0;top:0;width:426px;height:1px;background:#71839a;"></div>
<div class="h" style="left:1px;top:1px;width:424px;height:24px;"></div>
<div class="h" style="left:1px;top:1px;width:85px;height:24px;"><div class="ht" style="top:4px;margin-left:-14px;">국고<span class="L" style="transform:scaleX(0.818);margin-right:-3.12px;">5Y</span></div></div>
<div class="h" style="left:87px;top:1px;width:84px;height:24px;"><div class="ht" style="top:4px;"><span class="L" style="transform:scaleX(0.771);margin-right:-3.57px;">11</span>시<span class="L" style="transform:scaleX(0.771);margin-right:-3.57px;">30</span>분</div></div>
<div class="h" style="left:172px;top:1px;width:84px;height:24px;"><div class="ht" style="top:4px;"><span class="L" style="transform:scaleX(0.771);margin-right:-3.57px;">16</span>시<span class="L" style="transform:scaleX(0.771);margin-right:-3.57px;">00</span>분</div></div>
<div class="h" style="left:257px;top:1px;width:83px;height:24px;"><div class="ht" style="top:5px;">전기</div></div>
<div class="h" style="left:341px;top:1px;width:83px;height:24px;"><div class="ht" style="top:5px;">전기대비</div></div>
<div style="left:86px;top:1px;width:1px;height:24px;background:#5b8fc8;"></div>
<div style="left:171px;top:1px;width:1px;height:24px;background:#5b8fc8;"></div>
<div style="left:256px;top:1px;width:1px;height:24px;background:#5b8fc8;"></div>
<div style="left:340px;top:1px;width:1px;height:24px;background:#5b8fc8;"></div>
<svg width="4" height="4" style="position:absolute;left:81px;top:18px;"><path d="M4 0 L4 4 L0 4 Z" fill="#fff"/></svg>
<div class="d" style="left:1px;top:25px;width:85px;height:23px;"><div class="t" style="top:4.0px;">25/09/05</div></div>
<div class="n" style="left:87px;top:25px;width:84px;height:23px;"><div class="t" style="top:4.0px;right:8px;">2,627</div></div>
<div class="n" style="left:172px;top:25px;width:84px;height:23px;"><div class="t" style="top:4.0px;right:8px;">2,620</div></div>
<div class="n" style="left:257px;top:25px;width:83px;height:23px;"><div class="t" style="top:4.0px;right:8px;">2,643</div></div>
<div class="n" style="left:341px;top:25px;width:83px;height:23px;"><div class="t" style="top:4.0px;right:4px;color:#0000d0;"><span class="m2">-</span>0,023</div></div>
<div class="d" style="left:1px;top:49px;width:85px;height:23px;"><div class="t" style="top:4.0px;">25/09/04</div></div>
<div class="n" style="left:87px;top:49px;width:84px;height:23px;"><div class="t" style="top:4.0px;right:8px;">2,637</div></div>
<div class="n" style="left:172px;top:49px;width:84px;height:23px;"><div class="t" style="top:4.0px;right:8px;">2,643</div></div>
<div class="n" style="left:257px;top:49px;width:83px;height:23px;"><div class="t" style="top:4.0px;right:8px;">2,654</div></div>
<div class="n" style="left:341px;top:49px;width:83px;height:23px;"><div class="t" style="top:4.0px;right:4px;color:#0000d0;"><span class="m2">-</span>0,011</div></div>
<div class="d" style="left:1px;top:73px;width:85px;height:23px;"><div class="t" style="top:4.0px;">25/09/03</div></div>
<div class="n" style="left:87px;top:73px;width:84px;height:23px;"><div class="t" style="top:4.0px;right:8px;">2,639</div></div>
<div class="n" style="left:172px;top:73px;width:84px;height:23px;"><div class="t" style="top:4.0px;right:8px;">2,654</div></div>
<div class="n" style="left:257px;top:73px;width:83px;height:23px;"><div class="t" style="top:4.0px;right:8px;">2,619</div></div>
<div class="n" style="left:341px;top:73px;width:83px;height:23px;"><div class="t" style="top:4.0px;right:4px;color:#d00000;">0,035</div></div>
<div class="d" style="left:1px;top:97px;width:85px;height:24px;"><div class="t" style="top:5.0px;">25/09/02</div></div>
<div class="n" style="left:87px;top:97px;width:84px;height:24px;"><div class="t" style="top:5.0px;right:8px;">2,605</div></div>
<div class="n" style="left:172px;top:97px;width:84px;height:24px;"><div class="t" style="top:5.0px;right:8px;">2,619</div></div>
<div class="n" style="left:257px;top:97px;width:83px;height:24px;"><div class="t" style="top:5.0px;right:8px;">2,597</div></div>
<div class="n" style="left:341px;top:97px;width:83px;height:24px;"><div class="t" style="top:5.0px;right:4px;color:#d00000;">0,022</div></div>
<div class="d" style="left:1px;top:122px;width:85px;height:23px;"><div class="t" style="top:4.0px;">25/09/01</div></div>
<div class="n" style="left:87px;top:122px;width:84px;height:23px;"><div class="t" style="top:4.0px;right:8px;">2,588</div></div>
<div class="n" style="left:172px;top:122px;width:84px;height:23px;"><div class="t" style="top:4.0px;right:8px;">2,597</div></div>
<div class="n" style="left:257px;top:122px;width:83px;height:23px;"><div class="t" style="top:4.0px;right:8px;">2,583</div></div>
<div class="n" style="left:341px;top:122px;width:83px;height:23px;"><div class="t" style="top:4.0px;right:4px;color:#d00000;">0,014</div></div>
<div class="d" style="left:1px;top:146px;width:85px;height:24px;"><div class="t" style="top:5.0px;">25/08/29</div></div>
<div class="n" style="left:87px;top:146px;width:84px;height:24px;"><div class="t" style="top:5.0px;right:8px;">2,590</div></div>
<div class="n" style="left:172px;top:146px;width:84px;height:24px;"><div class="t" style="top:5.0px;right:8px;">2,583</div></div>
<div class="n" style="left:257px;top:146px;width:83px;height:24px;"><div class="t" style="top:5.0px;right:8px;">2,576</div></div>
<div class="n" style="left:341px;top:146px;width:83px;height:24px;"><div class="t" style="top:5.0px;right:4px;color:#d00000;">0,007</div></div>
<div class="d" style="left:1px;top:171px;width:85px;height:23px;"><div class="t" style="top:4.0px;">25/08/28</div></div>
<div class="n" style="left:87px;top:171px;width:84px;height:23px;"><div class="t" style="top:4.0px;right:8px;">2,554</div></div>
<div class="n" style="left:172px;top:171px;width:84px;height:23px;"><div class="t" style="top:4.0px;right:8px;">2,576</div></div>
<div class="n" style="left:257px;top:171px;width:83px;height:23px;"><div class="t" style="top:4.0px;right:8px;">2,569</div></div>
<div class="n" style="left:341px;top:171px;width:83px;height:23px;"><div class="t" style="top:4.0px;right:4px;color:#d00000;">0,007</div></div>
<div class="d" style="left:1px;top:195px;width:85px;height:24px;"><div class="t" style="top:5.0px;">25/08/27</div></div>
<div class="n" style="left:87px;top:195px;width:84px;height:24px;"><div class="t" style="top:5.0px;right:8px;">2,580</div></div>
<div class="n" style="left:172px;top:195px;width:84px;height:24px;"><div class="t" style="top:5.0px;right:8px;">2,569</div></div>
<div class="n" style="left:257px;top:195px;width:83px;height:24px;"><div class="t" style="top:5.0px;right:8px;">2,596</div></div>
<div class="n" style="left:341px;top:195px;width:83px;height:24px;"><div class="t" style="top:5.0px;right:4px;color:#0000d0;"><span class="m2">-</span>0,027</div></div>
<div class="d" style="left:1px;top:220px;width:85px;height:23px;"><div class="t" style="top:4.0px;">25/08/26</div></div>
<div class="n" style="left:87px;top:220px;width:84px;height:23px;"><div class="t" style="top:4.0px;right:8px;">2,591</div></div>
<div class="n" style="left:172px;top:220px;width:84px;height:23px;"><div class="t" style="top:4.0px;right:8px;">2,596</div></div>
<div class="n" style="left:257px;top:220px;width:83px;height:23px;"><div class="t" style="top:4.0px;right:8px;">2,602</div></div>
<div class="n" style="left:341px;top:220px;width:83px;height:23px;"><div class="t" style="top:4.0px;right:4px;color:#0000d0;"><span class="m2">-</span>0,006</div></div>
<div class="d" style="left:1px;top:244px;width:85px;height:24px;"><div class="t" style="top:5.0px;">25/08/25</div></div>
<div class="n" style="left:87px;top:244px;width:84px;height:24px;"><div class="t" style="top:5.0px;right:8px;">2,600</div></div>
<div class="n" style="left:172px;top:244px;width:84px;height:24px;"><div class="t" style="top:5.0px;right:8px;">2,602</div></div>
<div class="n" style="left:257px;top:244px;width:83px;height:24px;"><div class="t" style="top:5.0px;right:8px;">2,624</div></div>
<div class="n" style="left:341px;top:244px;width:83px;height:24px;"><div class="t" style="top:5.0px;right:4px;color:#0000d0;"><span class="m2">-</span>0,022</div></div>
<div class="d" style="left:1px;top:269px;width:85px;height:23px;"><div class="t" style="top:4.0px;">25/08/22</div></div>
<div class="n" style="left:87px;top:269px;width:84px;height:23px;"><div class="t" style="top:4.0px;right:8px;">2,613</div></div>
<div class="n" style="left:172px;top:269px;width:84px;height:23px;"><div class="t" style="top:4.0px;right:8px;">2,624</div></div>
<div class="n" style="left:257px;top:269px;width:83px;height:23px;"><div class="t" style="top:4.0px;right:8px;">2,605</div></div>
<div class="n" style="left:341px;top:269px;width:83px;height:23px;"><div class="t" style="top:4.0px;right:4px;color:#d00000;">0,019</div></div>
<div class="d" style="left:1px;top:293px;width:85px;height:2px;"><div class="t" style="top:-6.0px;"></div></div>
<div class="n" style="left:87px;top:293px;width:84px;height:2px;"><div class="t" style="top:-6.0px;right:8px;"></div></div>
<div class="n" style="left:172px;top:293px;width:84px;height:2px;"><div class="t" style="top:-6.0px;right:8px;"></div></div>
<div class="n" style="left:257px;top:293px;width:83px;height:2px;"><div class="t" style="top:-6.0px;right:8px;"></div></div>
<div class="n" style="left:341px;top:293px;width:83px;height:2px;"><div class="t" style="top:-6.0px;right:4px;color:#d00000;"></div></div>
<div class="hl" style="left:1px;top:48px;width:424px;"></div>
<div class="hl" style="left:1px;top:72px;width:424px;"></div>
<div class="hl" style="left:1px;top:96px;width:424px;"></div>
<div class="hl" style="left:1px;top:121px;width:424px;"></div>
<div class="hl" style="left:1px;top:145px;width:424px;"></div>
<div class="hl" style="left:1px;top:170px;width:424px;"></div>
<div class="hl" style="left:1px;top:194px;width:424px;"></div>
<div class="hl" style="left:1px;top:219px;width:424px;"></div>
<div class="hl" style="left:1px;top:243px;width:424px;"></div>
<div class="hl" style="left:1px;top:268px;width:424px;"></div>
<div class="hl" style="left:1px;top:292px;width:424px;"></div>
<div class="vl" style="left:86px;top:25px;height:270px;"></div>
<div class="vl" style="left:171px;top:25px;height:270px;"></div>
<div class="vl" style="left:256px;top:25px;height:270px;"></div>
<div class="vl" style="left:340px;top:25px;height:270px;"></div>
<div class="vl" style="left:424px;top:25px;height:270px;"></div>
<div style="left:425px;top:0;width:1px;height:295px;background:#fff;"></div>
</div>
</body></html>
